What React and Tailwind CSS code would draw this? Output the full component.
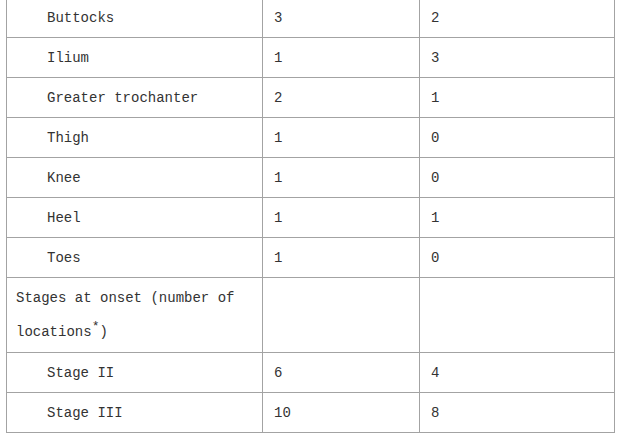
export default function App() {
  const rows = [
    { label: "Buttocks", a: "3", b: "2" },
    { label: "Ilium", a: "1", b: "3" },
    { label: "Greater trochanter", a: "2", b: "1" },
    { label: "Thigh", a: "1", b: "0" },
    { label: "Knee", a: "1", b: "0" },
    { label: "Heel", a: "1", b: "1" },
    { label: "Toes", a: "1", b: "0" },
  ];
  const rows2 = [
    { label: "Stage II", a: "6", b: "4" },
    { label: "Stage III", a: "10", b: "8" },
  ];
  const td = "border border-[#a3a3a3] pt-[3px] pb-[2px] align-top";
  return (
    <div className="w-[620px] h-[438px] overflow-hidden bg-white">
      <table
        className="ml-[6px] -mt-[3px] table-fixed border-collapse text-[14px] leading-[34px] text-[#333333]"
        style={{ fontFamily: '"Liberation Mono", "DejaVu Sans Mono", monospace', width: "608px" }}
      >
        <colgroup>
          <col className="w-[256px]" />
          <col className="w-[157px]" />
          <col className="w-[195px]" />
        </colgroup>
        <tbody>
          {rows.map((r) => (
            <tr key={r.label}>
              <td className={`${td} pl-[40px]`}>{r.label}</td>
              <td className={`${td} pl-[11px]`}>{r.a}</td>
              <td className={`${td} pl-[11px]`}>{r.b}</td>
            </tr>
          ))}
          <tr>
            <td className="border border-[#a3a3a3] pt-[3px] pb-[3px] pl-[9px] pr-[6px] align-top">
              Stages at onset (number of locations
              <sup className="text-[13px] leading-none">*</sup>)
            </td>
            <td className={`${td} pl-[11px]`}></td>
            <td className={`${td} pl-[11px]`}></td>
          </tr>
          {rows2.map((r) => (
            <tr key={r.label}>
              <td className={`${td} pl-[40px]`}>{r.label}</td>
              <td className={`${td} pl-[11px]`}>{r.a}</td>
              <td className={`${td} pl-[11px]`}>{r.b}</td>
            </tr>
          ))}
        </tbody>
      </table>
    </div>
  );
}
